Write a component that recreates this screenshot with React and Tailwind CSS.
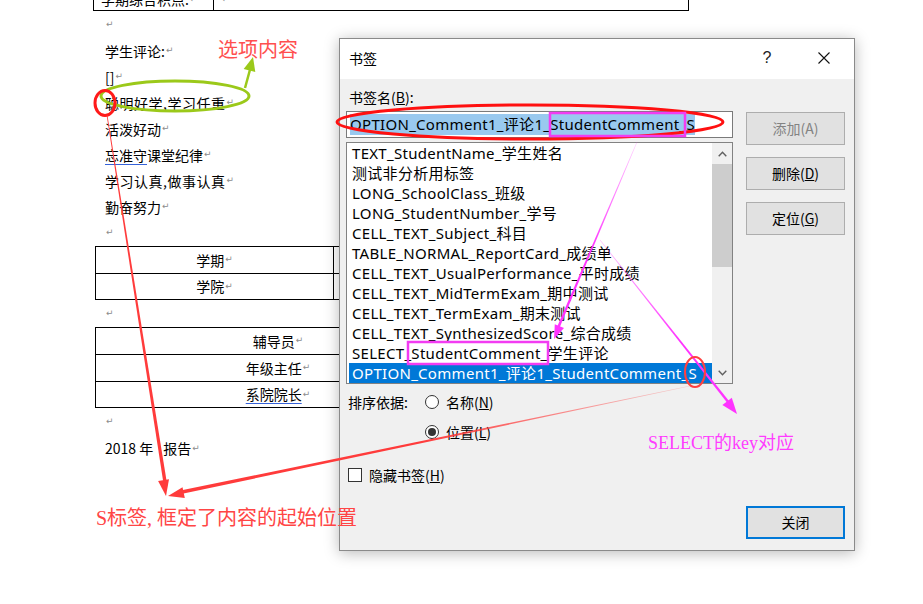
function taper(x1, y1, w1, x2, y2, w2) {
  const dx = x2 - x1, dy = y2 - y1, L = Math.hypot(dx, dy);
  const nx = -dy / L, ny = dx / L;
  return [
    [x1 + (nx * w1) / 2, y1 + (ny * w1) / 2],
    [x2 + (nx * w2) / 2, y2 + (ny * w2) / 2],
    [x2 - (nx * w2) / 2, y2 - (ny * w2) / 2],
    [x1 - (nx * w1) / 2, y1 - (ny * w1) / 2],
  ]
    .map((p) => p.map((v) => v.toFixed(1)).join(","))
    .join(" ");
}
function head(tx, ty, fx, fy, len, hw) {
  const dx = tx - fx, dy = ty - fy, L = Math.hypot(dx, dy);
  const ux = dx / L, uy = dy / L;
  const bx = tx - ux * len, by = ty - uy * len;
  return `${tx},${ty} ${(bx - uy * hw).toFixed(1)},${(by + ux * hw).toFixed(1)} ${(bx + uy * hw).toFixed(1)},${(by - ux * hw).toFixed(1)}`;
}

function P() {
  return <span className="font-['DejaVu_Sans',sans-serif] text-[9px] text-[#8c8c8c] ml-[1px]">↵</span>;
}

function DocLine({ children, h = "h-[26px]" }) {
  return <div className={`${h} flex items-center whitespace-nowrap`}>{children}</div>;
}

const items = [
  "TEXT_StudentName_学生姓名",
  "测试非分析用标签",
  "LONG_SchoolClass_班级",
  "LONG_StudentNumber_学号",
  "CELL_TEXT_Subject_科目",
  "TABLE_NORMAL_ReportCard_成绩单",
  "CELL_TEXT_UsualPerformance_平时成绩",
  "CELL_TEXT_MidTermExam_期中测试",
  "CELL_TEXT_TermExam_期末测试",
  "CELL_TEXT_SynthesizedScore_综合成绩",
  "SELECT_StudentComment_学生评论",
  "OPTION_Comment1_评论1_StudentComment_S",
];

function Btn({ children, disabled, primary, className = "" }) {
  return (
    <div
      className={`w-[99px] h-[33px] flex items-center justify-center bg-[#e1e1e1] text-[14px] ${
        primary ? "border-2 border-[#0078d7]" : "border border-[#adadad]"
      } ${disabled ? "text-[#838383]" : "text-black"} ${className}`}
    >
      {children}
    </div>
  );
}

export default function App() {
  return (
    <div className="relative w-[923px] h-[604px] overflow-hidden bg-white text-black font-['Noto_Sans_CJK_SC',sans-serif] text-[14px]">
      {/* Document */}
      <div className="pl-[93px]">
        <div className="mt-[-17px] w-[596px] h-[28px] border-x border-b border-black flex">
          <div className="w-[120px] border-r border-black flex items-end pb-[1px] pl-[7px] leading-[20px]">
            学期综合积点:<P />
          </div>
          <div className="pl-[7px] flex items-end pb-[1px] leading-[20px]">
            <P />
          </div>
        </div>
        <div className="pl-[12px] pt-[1px]">
          <DocLine><P /></DocLine>
          <DocLine>学生评论:<P /></DocLine>
          <DocLine>[]<P /></DocLine>
          <DocLine><span className="tracking-[0.5px]">聪明好学,学习任重</span><P /></DocLine>
          <DocLine>活泼好动<P /></DocLine>
          <DocLine>
            <span className="underline decoration-[#3562d8] underline-offset-[3px]">忘准守</span>课堂纪律<P />
          </DocLine>
          <DocLine><span className="tracking-[0.5px]">学习认真,做事认真</span><P /></DocLine>
          <DocLine>勤奋努力<P /></DocLine>
          <DocLine><P /></DocLine>
        </div>
        <div className="ml-[2px] w-[600px] border-t border-l border-black">
          <div className="flex h-[27px] border-b border-black">
            <div className="w-[238px] border-r border-black flex items-center justify-center">学期<P /></div>
          </div>
          <div className="flex h-[26px] border-b border-black">
            <div className="w-[238px] border-r border-black flex items-center justify-center">学院<P /></div>
          </div>
        </div>
        <div className="pl-[12px]">
          <DocLine h="h-[27px]"><P /></DocLine>
        </div>
        <div className="ml-[2px] w-[600px] border-t border-l border-black">
          <div className="flex h-[27px] border-b border-black">
            <div className="w-[364px] flex items-center justify-center">辅导员<P /></div>
          </div>
          <div className="flex h-[27px] border-b border-black">
            <div className="w-[364px] flex items-center justify-center">年级主任<P /></div>
          </div>
          <div className="flex h-[26px] border-b border-black">
            <div className="w-[364px] flex items-center justify-center">
              <span className="underline decoration-[#3562d8] underline-offset-[3px]">系院院长</span>
              <P />
            </div>
          </div>
        </div>
        <div className="pl-[12px]">
          <DocLine h="h-[27px]"><P /></DocLine>
          <DocLine h="h-[27px]">
            2018 年<span className="w-[10px]" />报告<P />
          </DocLine>
        </div>
      </div>

      {/* Dialog */}
      <div className="absolute left-[339px] top-[38px] w-[516px] h-[513px] flex flex-col bg-[#f0f0f0] border border-[#8a8a8a] shadow-[0_2px_14px_rgba(0,0,0,0.28)]">
        <div className="h-[40px] shrink-0 bg-white flex items-center pl-[9px] pr-[24px] pb-[2px] text-[14px]">
          <span>书签</span>
          <span className="ml-auto w-[14px] text-center text-[16px] font-['Liberation_Sans',sans-serif] text-[#222]">?</span>
          <svg className="ml-[44px]" width="12" height="12" viewBox="0 0 12 12">
            <path d="M0.5 0.5 L11.5 11.5 M11.5 0.5 L0.5 11.5" stroke="#111" strokeWidth="1.1" fill="none" />
          </svg>
        </div>
        <div className="flex-1 flex px-[6px]">
          <div className="w-[387px] flex flex-col">
            <div className="mt-[8px] h-[20px] leading-[20px] pl-[3px]">
              书签名(<u>B</u>):
            </div>
            <div className="mt-[4px] h-[27px] bg-white border border-[#7a7a7a] flex items-center pl-[3px] whitespace-nowrap overflow-hidden">
              <span className="bg-[#99c9ef] leading-[21px] text-[15px] tracking-[0.3px] font-['Noto_Sans','Noto_Sans_CJK_SC',sans-serif]">
                OPTION_Comment1_评论1_StudentComment_S
              </span>
            </div>
            <div className="mt-[4px] h-[242px] bg-white border border-[#828282] flex">
              <div className="flex-1 min-w-0 pl-[2px] flex flex-col text-[15px] tracking-[0.3px] font-['Noto_Sans','Noto_Sans_CJK_SC',sans-serif]">
                {items.map((t, i) => (
                  <div
                    key={i}
                    className={`h-[20px] leading-[20px] px-[3px] whitespace-nowrap overflow-hidden ${
                      i === 11 ? "bg-[#0078d7] text-white" : ""
                    }`}
                  >
                    {t}
                  </div>
                ))}
              </div>
              <div className="w-[20px] shrink-0 bg-[#f0f0f0] flex flex-col">
                <div className="h-[21px] flex items-center justify-center">
                  <svg width="9" height="6" viewBox="0 0 9 6">
                    <path d="M0.7 5.3 L4.5 1.3 L8.3 5.3" stroke="#606060" strokeWidth="1.4" fill="none" />
                  </svg>
                </div>
                <div className="h-[103px] bg-[#cdcdcd]" />
                <div className="flex-1" />
                <div className="h-[21px] flex items-center justify-center">
                  <svg width="9" height="6" viewBox="0 0 9 6">
                    <path d="M0.7 0.7 L4.5 4.7 L8.3 0.7" stroke="#606060" strokeWidth="1.4" fill="none" />
                  </svg>
                </div>
              </div>
            </div>
            <div className="mt-[8px] h-[20px] flex items-center">
              <span className="ml-[2px] w-[77px]">排序依据:</span>
              <span className="w-[14px] h-[14px] rounded-full border border-[#333] bg-white" />
              <span className="ml-[7px]">名称(<u>N</u>)</span>
            </div>
            <div className="mt-[10px] h-[20px] flex items-center">
              <span className="ml-[79px] w-[14px] h-[14px] rounded-full border border-[#333] bg-white flex items-center justify-center">
                <span className="w-[8px] h-[8px] rounded-full bg-[#333]" />
              </span>
              <span className="ml-[7px]">位置(<u>L</u>)</span>
            </div>
            <div className="mt-[23px] h-[20px] flex items-center">
              <span className="ml-[2px] w-[14px] h-[14px] border border-[#333] bg-white" />
              <span className="ml-[7px]">隐藏书签(<u>H</u>)</span>
            </div>
          </div>
          <div className="ml-[13px] w-[99px] flex flex-col">
            <Btn disabled className="mt-[33px]">添加(A)</Btn>
            <Btn className="mt-[12px]">删除(<u>D</u>)</Btn>
            <Btn className="mt-[12px]">定位(<u>G</u>)</Btn>
            <Btn primary className="mt-auto mb-[11px]">关闭</Btn>
          </div>
        </div>
      </div>

      {/* Annotation drawing */}
      <svg className="absolute inset-0 pointer-events-none" width="923" height="604" viewBox="0 0 923 604">
        <defs>
          <linearGradient id="fadeRed" gradientUnits="userSpaceOnUse" x1="700" y1="386" x2="420" y2="445">
            <stop offset="0" stopColor="#ff3b3b" stopOpacity="0.15" />
            <stop offset="1" stopColor="#ff3b3b" stopOpacity="1" />
          </linearGradient>
          <linearGradient id="fadeMag1" gradientUnits="userSpaceOnUse" x1="637" y1="142" x2="590" y2="250">
            <stop offset="0" stopColor="#ff33ff" stopOpacity="0.25" />
            <stop offset="1" stopColor="#ff33ff" stopOpacity="1" />
          </linearGradient>
          <linearGradient id="fadeMag2" gradientUnits="userSpaceOnUse" x1="600" y1="240" x2="680" y2="340">
            <stop offset="0" stopColor="#ff33ff" stopOpacity="0.3" />
            <stop offset="1" stopColor="#ff33ff" stopOpacity="1" />
          </linearGradient>
        </defs>
        {/* green */}
        <ellipse cx="175" cy="96" rx="74" ry="15" fill="none" stroke="#9bc91a" strokeWidth="3" />
        <polygon points={taper(245, 88, 2.5, 251, 66, 2.5)} fill="#9bc91a" />
        <polygon points={head(253, 57, 245, 88, 14, 6)} fill="#9bc91a" />
        {/* red small circle */}
        <ellipse cx="105" cy="103" rx="10" ry="12.5" fill="none" stroke="#ff1a1a" strokeWidth="3" />
        {/* red line down */}
        <polygon points={taper(107, 115, 0.8, 165, 482, 3.5)} fill="#ff3b3b" />
        <polygon points={head(166, 496, 107, 115, 16, 5.5)} fill="#ff3b3b" />
        {/* red line from S */}
        <polygon points={taper(690, 386, 0.6, 182, 492, 3.5)} fill="url(#fadeRed)" />
        <polygon points={head(168, 496, 690, 386, 16, 5.5)} fill="#ff3b3b" />
        {/* input ellipse */}
        <ellipse cx="530" cy="122" rx="193" ry="17" fill="none" stroke="#ff1010" strokeWidth="3" />
        {/* magenta rects */}
        <rect x="550" y="113" width="135" height="23" fill="none" stroke="#f23cf2" strokeWidth="2.5" />
        <rect x="408" y="342" width="140" height="22" fill="none" stroke="#f23cf2" strokeWidth="2.5" />
        {/* magenta arrows */}
        <polygon points={taper(637, 142, 0.6, 558, 328, 2.5)} fill="url(#fadeMag1)" />
        <polygon points={head(554, 339, 637, 142, 14, 5)} fill="#ff33ff" />
        <polygon points={taper(600, 240, 0.6, 729, 403, 2.5)} fill="url(#fadeMag2)" />
        <polygon points={head(737, 414, 600, 240, 16, 6)} fill="#ff33ff" />
        {/* S circle */}
        <ellipse cx="695" cy="372" rx="10" ry="15" fill="none" stroke="#ff4040" strokeWidth="2" />
      </svg>

      {/* Annotation texts */}
      <span className="absolute left-[218px] top-[38px] leading-[24px] text-[20px] text-[#ff4f4f] whitespace-nowrap font-['Liberation_Serif','Noto_Sans_CJK_SC',serif]">
        选项内容
      </span>
      <span className="absolute left-[96px] top-[506px] leading-[24px] text-[20px] text-[#ff4545] whitespace-nowrap font-['Liberation_Serif','Noto_Sans_CJK_SC',serif]">
        S标签, 框定了内容的起始位置
      </span>
      <span className="absolute left-[648px] top-[432px] leading-[22px] text-[18px] text-[#ff3cff] whitespace-nowrap font-['Liberation_Serif','Noto_Sans_CJK_SC',serif]">
        SELECT的key对应
      </span>
    </div>
  );
}
